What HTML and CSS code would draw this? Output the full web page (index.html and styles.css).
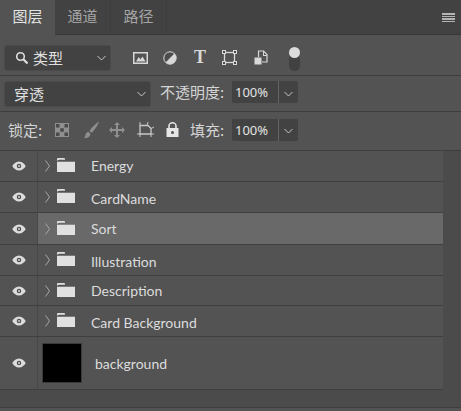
FILE: index.html
```html
<!DOCTYPE html>
<html lang="zh">
<head>
    <meta charset="UTF-8">
    <meta name="viewport" content="width=device-width, initial-scale=1.0">
    <title>图层</title>
    <link rel="stylesheet" href="styles.css">
</head>
<body>
<div class="panel">
    <div class="tabs">
        <div class="tab active">图层</div>
        <div class="tab">通道</div>
        <div class="tab">路径</div>
        <div class="tab-menu"><span></span><span></span><span></span><span></span></div>
    </div>

    <div class="bar bar-filter">
        <div class="select select-kind">
            <svg class="search" width="14" height="14" viewBox="0 0 14 14"><circle cx="5.5" cy="5.5" r="3.8" fill="none" stroke="#ddd" stroke-width="1.6"/><path d="M8.3 8.3L12.5 12.5" stroke="#ddd" stroke-width="2.2"/></svg>
            <span class="select-text">类型</span>
            <svg class="chev" width="9" height="6" viewBox="0 0 9 6"><path d="M0.5 1L4.5 5L8.5 1" fill="none" stroke="#c8c8c8"/></svg>
        </div>
        <svg class="f-img" width="16" height="14" viewBox="0 0 16 14"><path fill="#d8d8d8" fill-rule="evenodd" d="M0 1h15v12H0zM1.5 2.500v9h12v-9z"/><path fill="#d8d8d8" d="M3 10.500L5.800 6l1.700 2.500L9.500 5.500l3 5z"/></svg>
        <svg class="f-adj" width="14" height="14" viewBox="0 0 14 14"><circle cx="7" cy="7" r="6.200" fill="#4c4c4c" stroke="#d8d8d8" stroke-width="1"/><path fill="#d8d8d8" d="M11.400 2.600A6.200 6.200 0 0 1 2.600 11.400z"/></svg>
        <span class="f-type">T</span>
        <svg class="f-shape" width="15" height="15" viewBox="0 0 15 15"><rect x="2.500" y="2.500" width="10" height="10" fill="none" stroke="#d8d8d8" stroke-width="1.300"/><g fill="#4c4c4c" stroke="#d8d8d8"><rect x="0.500" y="0.500" width="3" height="3"/><rect x="11.500" y="0.500" width="3" height="3"/><rect x="0.500" y="11.500" width="3" height="3"/><rect x="11.500" y="11.500" width="3" height="3"/></g></svg>
        <svg class="f-smart" width="14" height="15" viewBox="0 0 14 15"><path fill="none" stroke="#d8d8d8" stroke-width="1.200" d="M4.500 7V1h5l3.500 3.500V12H8"/><path fill="#d8d8d8" d="M9 1h1v4h3v1H9z"/><rect x="0.500" y="7.500" width="7" height="7" fill="#d8d8d8"/></svg>
        <div class="toggle"><span class="knob"></span></div>
    </div>

    <div class="bar bar-blend">
        <div class="select select-blend">
            <span class="select-text">穿透</span>
            <svg class="chev" width="9" height="6" viewBox="0 0 9 6"><path d="M0.500 1L4.500 5L8.500 1" fill="none" stroke="#c8c8c8"/></svg>
        </div>
        <span class="label opacity-label">不透明度:</span>
        <div class="num"><span class="num-val">100%</span><span class="num-btn"><svg width="9" height="6" viewBox="0 0 9 6"><path d="M0.500 1L4.500 5L8.500 1" fill="none" stroke="#c8c8c8"/></svg></span></div>
    </div>

    <div class="bar bar-lock">
        <span class="label lock-label">锁定:</span>
        <svg class="l-pixels" width="14" height="14" viewBox="0 0 14 14"><rect width="14" height="14" fill="#8f8f8f"/><g fill="#4a4a4a"><rect x="1" y="1" width="3.500" height="3.500"/><rect x="9.500" y="1" width="3.500" height="3.500"/><rect x="5.250" y="5.250" width="3.500" height="3.500"/><rect x="1" y="9.500" width="3.500" height="3.500"/><rect x="9.500" y="9.500" width="3.500" height="3.500"/></g></svg>
        <svg class="l-brush" width="17" height="18" viewBox="0 0 17 18"><path fill="#8f8f8f" d="M16 0.500C13 2.500 8.500 6.500 6.500 10l2 1.800C11.500 9 15 4 16 0.500z"/><path fill="#8f8f8f" d="M5.500 10.800c-2 .3-2.800 1.800-3 3.400-.2 1.200-1 1.800-2 2.300 2.500 1 6.300.6 7-3.500z"/></svg>
        <svg class="l-move" width="16" height="16" viewBox="0 0 16 16"><path fill="#8f8f8f" d="M8 0l3 3H9v4h4V5l3 3-3 3V9H9v4h2l-3 3-3-3h2V9H3v2L0 8l3-3v2h4V3H5z"/></svg>
        <svg class="l-board" width="17" height="15" viewBox="0 0 17 15"><path fill="none" stroke="#c8c8c8" stroke-width="1.300" d="M3 3.500h8l3 3V12H3z"/><path stroke="#c8c8c8" d="M0 12h3M14 12h3M3 0v3M14 12v3M3 12v3M11 0l-1 3.500M14 6.500l3-1.500"/></svg>
        <svg class="l-lock" width="13" height="15" viewBox="0 0 13 15"><path fill="#e6e6e6" fill-rule="evenodd" d="M0.500 6h12v9H.5zM6.500 9a1.500 1.500 0 1 0 0 3 1.500 1.500 0 0 0 0-3z"/><path fill="none" stroke="#e6e6e6" stroke-width="1.600" d="M3 6V4a3.500 3.200 0 0 1 7 0v2"/></svg>
        <span class="label fill-label">填充:</span>
        <div class="num"><span class="num-val">100%</span><span class="num-btn"><svg width="9" height="6" viewBox="0 0 9 6"><path d="M0.500 1L4.500 5L8.500 1" fill="none" stroke="#c8c8c8"/></svg></span></div>
    </div>

    <div class="layers">
        <div class="list">
            <div class="row">
                <div class="eye"><svg width="16" height="10" viewBox="0 0 15 11"><use href="#eye-icon"/></svg></div>
                <div class="row-main"><svg class="arrow" width="5" height="12" viewBox="0 0 5 12"><path d="M0.500 0.500L4.500 6L0.500 11.500" fill="none" stroke="#a8a8a8"/></svg><svg class="folder" width="18" height="14" viewBox="0 0 18 15" preserveAspectRatio="none"><use href="#folder-icon"/></svg><span class="name">Energy</span></div>
            </div>
            <div class="row">
                <div class="eye"><svg width="16" height="10" viewBox="0 0 15 11"><use href="#eye-icon"/></svg></div>
                <div class="row-main"><svg class="arrow" width="5" height="12" viewBox="0 0 5 12"><path d="M0.500 0.500L4.500 6L0.500 11.500" fill="none" stroke="#a8a8a8"/></svg><svg class="folder" width="18" height="14" viewBox="0 0 18 15" preserveAspectRatio="none"><use href="#folder-icon"/></svg><span class="name">CardName</span></div>
            </div>
            <div class="row selected">
                <div class="eye"><svg width="16" height="10" viewBox="0 0 15 11"><use href="#eye-icon"/></svg></div>
                <div class="row-main"><svg class="arrow" width="5" height="12" viewBox="0 0 5 12"><path d="M0.500 0.500L4.500 6L0.500 11.500" fill="none" stroke="#a8a8a8"/></svg><svg class="folder" width="18" height="14" viewBox="0 0 18 15" preserveAspectRatio="none"><use href="#folder-icon"/></svg><span class="name">Sort</span></div>
            </div>
            <div class="row">
                <div class="eye"><svg width="16" height="10" viewBox="0 0 15 11"><use href="#eye-icon"/></svg></div>
                <div class="row-main"><svg class="arrow" width="5" height="12" viewBox="0 0 5 12"><path d="M0.500 0.500L4.500 6L0.500 11.500" fill="none" stroke="#a8a8a8"/></svg><svg class="folder" width="18" height="14" viewBox="0 0 18 15" preserveAspectRatio="none"><use href="#folder-icon"/></svg><span class="name">Illustration</span></div>
            </div>
            <div class="row row-short">
                <div class="eye"><svg width="16" height="10" viewBox="0 0 15 11"><use href="#eye-icon"/></svg></div>
                <div class="row-main"><svg class="arrow" width="5" height="12" viewBox="0 0 5 12"><path d="M0.500 0.500L4.500 6L0.500 11.500" fill="none" stroke="#a8a8a8"/></svg><svg class="folder" width="18" height="14" viewBox="0 0 18 15" preserveAspectRatio="none"><use href="#folder-icon"/></svg><span class="name">Description</span></div>
            </div>
            <div class="row">
                <div class="eye"><svg width="16" height="10" viewBox="0 0 15 11"><use href="#eye-icon"/></svg></div>
                <div class="row-main"><svg class="arrow" width="5" height="12" viewBox="0 0 5 12"><path d="M0.500 0.500L4.500 6L0.500 11.500" fill="none" stroke="#a8a8a8"/></svg><svg class="folder" width="18" height="14" viewBox="0 0 18 15" preserveAspectRatio="none"><use href="#folder-icon"/></svg><span class="name">Card Background</span></div>
            </div>
            <div class="row row-bg">
                <div class="eye"><svg width="16" height="10" viewBox="0 0 15 11"><use href="#eye-icon"/></svg></div>
                <div class="row-main"><div class="thumb"></div><span class="name">background</span></div>
            </div>
            <div class="list-foot"></div>
        </div>
        <div class="scroll"></div>
    </div>
</div>

<svg class="defs" width="0" height="0">
    <symbol id="eye-icon" viewBox="0 0 15 11"><path fill="#dcdcdc" fill-rule="evenodd" d="M7.500 0.500C11 .5 13.500 3 15 5.500 13.500 8 11 10.500 7.500 10.500S1.500 8 0 5.500C1.500 3 4 .5 7.500 .5zM7.500 3a2.500 2.500 0 1 0 0 5 2.500 2.500 0 0 0 0-5z"/><circle cx="7.500" cy="5.500" r="1" fill="#dcdcdc"/></symbol>
    <symbol id="folder-icon" viewBox="0 0 18 15"><path fill="#e0e0e0" d="M0 3V1a1 1 0 0 1 1-1h6a1 1 0 0 1 1 1v1H2z"/><path fill="#e0e0e0" d="M0 4h18v11H0z"/></symbol>
</svg>
</body>
</html>
```
FILE: styles.css
```css
* {
    box-sizing: border-box;
}

html, body {
    margin: 0;
    padding: 0;
    background: #535353;
}

.panel {
    width: 461px;
    height: 411px;
    overflow: hidden;
    background: #535353;
    color: #e0e0e0;
    font-family: "Noto Sans CJK SC", "Noto Sans", sans-serif;
    font-size: 15px;
}

/* tabs */
.tabs {
    display: flex;
    height: 35px;
    background: #424242;
    border-bottom: 1px solid #383838;
}

.tab {
    width: 56px;
    padding-top: 4px;
    text-align: center;
    font-size: 15px;
    line-height: 24px;
    color: #a4a4a4;
    border-right: 1px solid #3c3c3c;
}

.tab.active {
    width: 55px;
    height: 35px;
    background: #535353;
    color: #e4e4e4;
    border-right: 0;
}

.tab-menu {
    margin-left: auto;
    padding: 13px 6px 0 0;
    display: flex;
    flex-direction: column;
    gap: 1px;
}

.tab-menu span {
    display: block;
    width: 13px;
    height: 1.500px;
    background: #b4b4b4;
}

/* tool rows */
.bar {
    display: flex;
    align-items: center;
    border-bottom: 1px solid #3e3e3e;
}

.bar-filter {
    height: 41px;
    padding: 5px 0 0 4px;
}

.bar-blend {
    height: 36px;
    padding-left: 4px;
}

.bar-lock {
    height: 39px;
    padding: 0 0 3px 8px;
}

.select {
    display: flex;
    align-items: center;
    height: 26px;
    background: #424242;
    border: 1px solid #4a4a4a;
    border-radius: 3px;
    font-size: 15px;
    color: #e0e0e0;
}

.select-kind {
    width: 107px;
    padding-left: 10px;
}

.select-blend {
    width: 147px;
    padding-left: 9px;
}

.select-text {
    flex: 1;
}

.search {
    margin-right: 4px;
}

.chev {
    margin-right: 4px;
}

.f-img {
    margin-left: 22px;
}

.f-adj {
    margin-left: 14px;
}

.f-type {
    width: 14px;
    margin-left: 16px;
    font-family: "Liberation Serif", serif;
    font-weight: bold;
    font-size: 18px;
    line-height: 17px;
    color: #d8d8d8;
    text-align: center;
}

.f-shape {
    margin-left: 15px;
}

.f-smart {
    margin-left: 17px;
}

.toggle {
    position: relative;
    width: 11px;
    height: 17px;
    margin: 10px 0 0 21px;
    background: #414141;
    border-radius: 6px;
}

.knob {
    position: absolute;
    left: 0;
    top: -7px;
    width: 11px;
    height: 11px;
    border-radius: 50%;
    background: #dcdcdc;
}

.label {
    font-size: 15px;
    color: #d4d4d4;
    white-space: nowrap;
}

.opacity-label {
    margin: -5px 0 0 9px;
    width: 72px;
}

.lock-label {
    width: 46px;
}

.fill-label {
    width: 42px;
    margin-left: 11px;
}

.num {
    display: flex;
    height: 22px;
    width: 66px;
    background: #424242;
    border-radius: 2px;
}

.bar-blend .num {
    margin-top: -3px;
}

.num-val {
    width: 47px;
    padding-left: 3px;
    font-family: "Noto Sans", sans-serif;
    font-size: 13px;
    line-height: 22px;
    color: #e4e4e4;
    border-right: 1px solid #666;
}

.num-btn {
    flex: 1;
    display: flex;
    align-items: center;
    justify-content: center;
    padding-top: 3px;
}

.l-pixels {
    margin-left: 1px;
}

.l-brush {
    margin-left: 14px;
}

.l-move {
    margin-left: 9px;
}

.l-board {
    margin-left: 12px;
}

.l-lock {
    margin-left: 12px;
}

/* layer list */
.layers {
    display: flex;
    height: 257px;
    border-bottom: 1px solid #3f3f3f;
}

.list {
    width: 443px;
}

.scroll {
    width: 18px;
    background: #4b4b4b;
}

.row {
    display: flex;
    height: 31px;
    border-bottom: 1px solid #3f3f3f;
}

.row.selected {
    height: 32px;
}

.row.row-short {
    height: 30px;
}

.row.row-bg {
    height: 53px;
}

.eye {
    display: flex;
    align-items: center;
    justify-content: center;
    width: 38px;
    border-right: 1px solid #484848;
}

.row-main {
    flex: 1;
    display: flex;
    align-items: center;
    padding-left: 7px;
}

.selected .row-main {
    background: #696969;
}

.row-bg .row-main {
    padding-left: 4px;
}

.folder {
    margin: 0 0 2px 7px;
}

.name {
    margin-left: 16px;
    font-family: "Lato", sans-serif;
    font-size: 14px;
    color: #dcdcdc;
}

.row:nth-child(even) .name {
    margin-top: 2px;
}

.row:first-child .name {
    margin-bottom: 2px;
}

.thumb {
    width: 40px;
    height: 40px;
    background: #000;
    border: 1px solid #3a3a3a;
}

.row-bg .name {
    margin-left: 13px;
}

.list-foot {
    height: 17px;
    background: #4b4b4b;
}

.defs {
    position: absolute;
}
```
